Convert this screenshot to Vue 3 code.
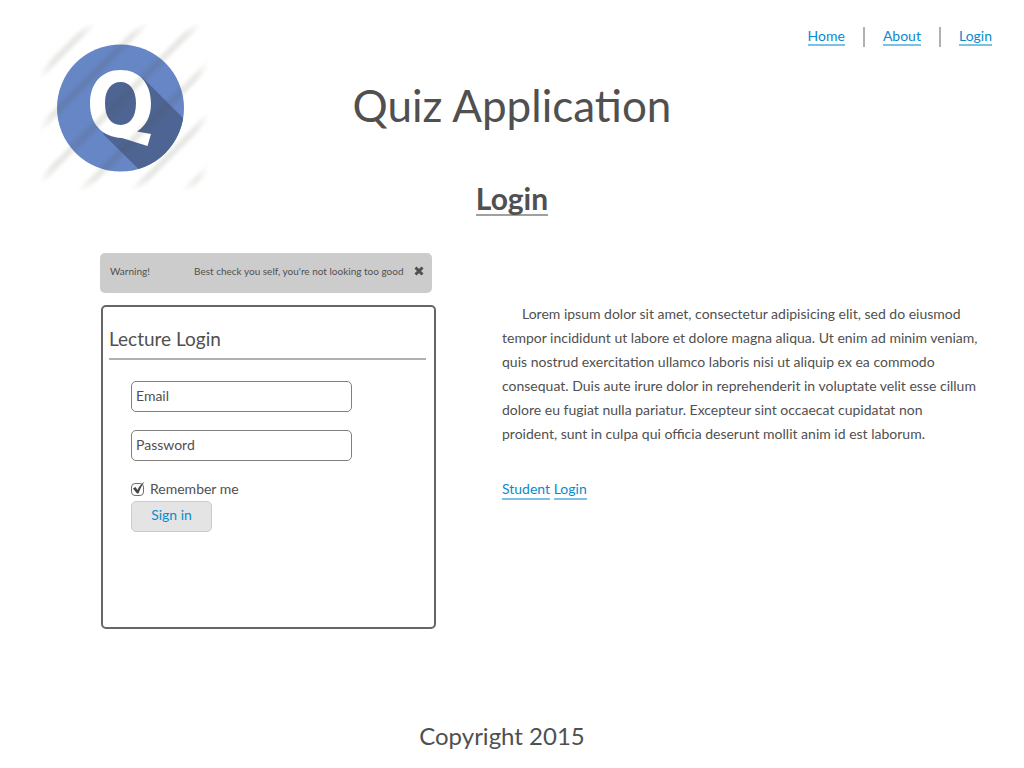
<script setup>
import { ref } from 'vue'

const links = ['Home', 'About', 'Login']
const stripes = [52, 105, 158, 210, 262, 314]
const lines = [
  'Lorem ipsum dolor sit amet, consectetur adipisicing elit, sed do eiusmod',
  'tempor incididunt ut labore et dolore magna aliqua. Ut enim ad minim veniam,',
  'quis nostrud exercitation ullamco laboris nisi ut aliquip ex ea commodo',
  'consequat. Duis aute irure dolor in reprehenderit in voluptate velit esse cillum',
  'dolore eu fugiat nulla pariatur. Excepteur sint occaecat cupidatat non',
  'proident, sunt in culpa qui officia deserunt mollit anim id est laborum.'
]
const email = ref('')
const password = ref('')
const remember = ref(true)
const warning = ref(true)
</script>

<template>
  <div class="page">
    <header class="top">
      <svg class="logo" viewBox="0 0 168 168" role="img" aria-label="Quiz logo">
        <defs>
          <clipPath id="disc"><circle cx="80.5" cy="85" r="63.5" /></clipPath>
          <filter id="soft" x="-20%" y="-20%" width="140%" height="140%"><feGaussianBlur stdDeviation="1.5" /></filter>
          <filter id="edge" x="-20%" y="-20%" width="140%" height="140%"><feGaussianBlur stdDeviation="5" /></filter>
          <mask id="fade"><rect x="6" y="6" width="156" height="156" fill="#fff" filter="url(#edge)" /></mask>
        </defs>
        <circle cx="80.5" cy="85" r="63.5" fill="#6686c5" />
        <g clip-path="url(#disc)" fill="#4e6594">
          <path d="M103 55 L168 120 V168 H121 L63 111 Z" />
          <ellipse cx="80.5" cy="80.3" rx="20" ry="26" />
        </g>
        <path
          fill="#fff"
          fill-rule="evenodd"
          d="M80.5 47 C99 47 111 60 111 80.5 C111 93 106 103 97 108.5 L111 111 L107.5 123 L82 115 C62 114 50 101 50 80.5 C50 60 62 47 80.5 47 Z M80.5 59 C71 59 65 67 65 80.3 C65 94 71 102 80.5 102 C90 102 96 94 96 80.3 C96 67 90 59 80.5 59 Z"
        />
        <g mask="url(#fade)">
          <g filter="url(#soft)" stroke="#4a463c" stroke-opacity=".12" stroke-width="7">
            <line v-for="c in stripes" :key="c" :x1="c + 10" y1="-10" x2="-10" :y2="c + 10" />
          </g>
        </g>
      </svg>
      <h1>Quiz Application</h1>
      <nav aria-label="Main">
        <a v-for="l in links" :key="l" href="#"><span>{{ l }}</span></a>
      </nav>
    </header>

    <h2><span>Login</span></h2>

    <main>
      <section class="left">
        <div v-if="warning" class="alert" role="alert">
          <span class="kind">Warning!</span>
          <span>Best check you self, you're not looking too good</span>
          <button type="button" class="close" aria-label="Close" @click="warning = false">
            <svg viewBox="0 0 10 10"><path d="M1.5 1.5 8.5 8.5M8.5 1.5 1.5 8.5" /></svg>
          </button>
        </div>
        <form class="panel" @submit.prevent>
          <h3>Lecture Login</h3>
          <div class="fields">
            <input v-model="email" class="text" type="email" placeholder="Email" aria-label="Email" />
            <input v-model="password" class="text" type="password" placeholder="Password" aria-label="Password" />
            <label class="remember">
              <span class="tick">
                <input v-model="remember" type="checkbox" />
                <svg v-if="remember" viewBox="0 0 14 15"><path d="M2 7.5 4.5 6 6.5 9 C8 5.5 10 3 13.5 .5 C11 4 9 8 7.5 12.5 L6 12.5 Z" /></svg>
              </span>
              Remember me
            </label>
            <button type="submit" class="submit">Sign in</button>
          </div>
        </form>
      </section>

      <section class="right">
        <p>
          <template v-for="(line, i) in lines" :key="i">{{ line }}<br v-if="i < lines.length - 1" /></template>
        </p>
        <a class="student" href="#"><span>Student</span> <span>Login</span></a>
      </section>
    </main>

    <footer>Copyright 2015</footer>
  </div>
</template>

<style>
body { background: #fff; }
</style>

<style scoped>
* { box-sizing: border-box; }
.page {
  min-height: 100vh;
  display: flex;
  flex-direction: column;
  font-family: Lato, "Liberation Sans", sans-serif;
  font-size: 14px;
  color: #505050;
}
h1, h2, h3, p { margin: 0; font-weight: 400; }
a { color: #0a8acb; text-decoration: none; }
a span {
  display: inline-block;
  line-height: 18px;
  border-bottom: 2px solid #7cc0e4;
}
.top {
  display: grid;
  grid-template-columns: 1fr auto 1fr;
  padding: 23px 32px 0;
}
.logo { width: 168px; height: 168px; display: block; margin-left: 8px; }
h1 {
  font-size: 44px;
  line-height: 56px;
  padding-top: 54px;
}
nav {
  display: flex;
  justify-content: flex-end;
  align-self: start;
  padding-top: 4px;
}
nav a { line-height: 18px; height: 20px; }
nav a span { line-height: 17px; }
nav a + a {
  margin-left: 18px;
  padding-left: 18px;
  border-left: 2px solid #b0b0b0;
}
h2 {
  align-self: center;
  margin-top: -8px;
  font-size: 30px;
  line-height: 31px;
  font-weight: 700;
}
h2 span { display: block; border-bottom: 2px solid #a0a0a0; }
main {
  display: grid;
  grid-template-columns: minmax(0, 336fr) minmax(0, 486fr);
  gap: 66px;
  padding: 37px 36px 0 100px;
}
.alert {
  display: flex;
  align-items: center;
  height: 40px;
  margin-right: 4px;
  padding: 0 8px 4px 10px;
  border-radius: 5px;
  background: #ccc;
  font-size: 10px;
  white-space: nowrap;
}
.kind { flex: 0 0 84px; }
.close {
  width: 10px;
  height: 10px;
  margin-left: auto;
  padding: 0;
  border: 0;
  background: none;
}
.close svg { display: block; width: 10px; height: 10px; }
.close path { stroke: #505050; stroke-width: 3; fill: none; }
.panel {
  min-height: 324px;
  margin: 12px 0 0 1px;
  padding: 18px 8px 0 6px;
  border: 2px solid #666;
  border-radius: 5px;
}
h3 {
  font-size: 19px;
  line-height: 28px;
  padding-bottom: 5px;
  border-bottom: 2px solid #b0b0b0;
}
.fields {
  display: flex;
  flex-direction: column;
  align-items: flex-start;
  padding: 21px 74px 0 22px;
}
.text {
  width: 100%;
  height: 31px;
  margin-bottom: 18px;
  padding: 0 4px 3px;
  border: 1px solid #808080;
  border-radius: 5px;
  background: #fff;
  font: inherit;
  color: inherit;
  outline: none;
}
.text::placeholder { color: #505050; opacity: 1; }
.remember {
  display: flex;
  align-items: center;
  gap: 6px;
  line-height: 20px;
}
.tick { position: relative; display: block; width: 13px; height: 13px; }
.tick input {
  appearance: none;
  display: block;
  width: 13px;
  height: 13px;
  margin: 0;
  border: 1px solid #707070;
  border-radius: 4px;
}
.tick svg {
  position: absolute;
  left: 0;
  top: -2px;
  width: 14px;
  height: 15px;
  fill: #444;
  pointer-events: none;
}
.submit {
  width: 81px;
  height: 31px;
  margin-top: 2px;
  padding: 0 0 4px;
  border: 1px solid #ccc;
  border-radius: 5px;
  background: #e4e4e4;
  font: inherit;
  color: #0a8acb;
}
.right { padding-top: 49px; }
.right p {
  font-size: 14px;
  line-height: 24px;
  text-indent: 20px;
  white-space: nowrap;
}
.student { display: inline-block; margin-top: 34px; }
footer {
  margin: auto 20px 14px 0;
  text-align: center;
  font-size: 24px;
  line-height: 36px;
}
</style>
